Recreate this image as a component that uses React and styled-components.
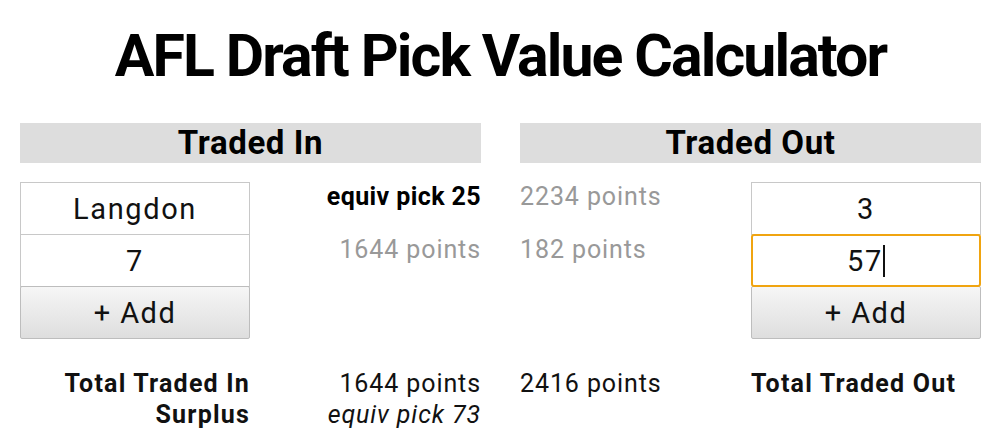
import styled, { createGlobalStyle } from 'styled-components';

const GlobalStyle = createGlobalStyle`
  html, body {
    margin: 0;
    padding: 0;
    background: #fff;
  }
  body {
    font-family: Roboto, "Liberation Sans", sans-serif;
    color: #111;
  }
`;

const Page = styled.div`
  width: 1000px;
  padding: 0 19px 0 20px;
  box-sizing: border-box;
`;

const Title = styled.h1`
  margin: 0;
  padding-top: 21px;
  height: 123px;
  box-sizing: border-box;
  text-align: center;
  font-size: 59px;
  font-weight: 700;
  letter-spacing: -1.9px;
  line-height: 70px;
  color: #000;
`;

const Columns = styled.div`
  display: grid;
  grid-template-columns: 461px 461px;
  column-gap: 39px;
`;

const Side = styled.section`
  display: flex;
  flex-direction: column;
`;

const SideHeader = styled.h2`
  margin: 0 0 19px;
  height: 40px;
  background: #dddddd;
  text-align: center;
  font-size: 33px;
  font-weight: 700;
  letter-spacing: 0.6px;
  line-height: 40px;
  color: #000;
`;

const Body = styled.div`
  display: grid;
  grid-template-columns: ${(p) => (p.$flip ? '231px 230px' : '230px 231px')};
`;

const Inputs = styled.div`
  display: flex;
  flex-direction: column;
`;

const Field = styled.div`
  height: 53px;
  box-sizing: border-box;
  border: 1px solid #c8c8c8;
  margin-top: -1px;
  background: #fff;
  display: flex;
  align-items: center;
  justify-content: center;
  font-size: 29px;
  letter-spacing: 1.6px;
  color: #111;
  &:first-child {
    margin-top: 0;
  }
  ${(p) =>
    p.$focused &&
    `
    border: 2px solid #f0a410;
    border-radius: 3px;
    position: relative;
    z-index: 1;
  `}
`;

const Caret = styled.span`
  display: inline-block;
  width: 2px;
  height: 32px;
  background: #111;
`;

const AddButton = styled.button`
  height: 53px;
  margin-top: -1px;
  border: 1px solid #bdbdbd;
  border-radius: 2px;
  background: linear-gradient(#f6f6f6, #dedede);
  font-family: Roboto, "Liberation Sans", sans-serif;
  font-size: 29px;
  letter-spacing: 1.4px;
  color: #111;
  padding: 0;
`;

const Notes = styled.div`
  display: flex;
  flex-direction: column;
  text-align: ${(p) => p.$align};
`;

const Note = styled.div`
  height: 53px;
  font-size: 25px;
  letter-spacing: ${(p) => (p.$bold ? '0.4px' : '0.9px')};
  line-height: 30px;
  font-weight: ${(p) => (p.$bold ? 700 : 400)};
  color: ${(p) => (p.$bold ? '#000' : '#999')};
`;

const Totals = styled.div`
  margin-top: 29px;
  display: grid;
  grid-template-columns: ${(p) => (p.$flip ? '231px 230px' : '230px 231px')};
`;

const TotalCell = styled.div`
  font-size: 25px;
  line-height: 31px;
  letter-spacing: ${(p) => (p.$bold ? '1.2px' : '0.9px')};
  text-align: ${(p) => p.$align};
  font-weight: ${(p) => (p.$bold ? 700 : 400)};
  color: #111;
`;

const Em = styled.i`
  font-style: italic;
`;

export default function App() {
  return (
    <Page>
      <GlobalStyle />
      <Title>AFL Draft Pick Value Calculator</Title>
      <Columns>
        <Side>
          <SideHeader>Traded In</SideHeader>
          <Body>
            <Inputs>
              <Field>Langdon</Field>
              <Field>7</Field>
              <AddButton>+ Add</AddButton>
            </Inputs>
            <Notes $align="right">
              <Note $bold>equiv pick 25</Note>
              <Note>1644 points</Note>
            </Notes>
          </Body>
          <Totals>
            <TotalCell $align="right" $bold>
              Total Traded In
              <br />
              Surplus
            </TotalCell>
            <TotalCell $align="right">
              1644 points
              <br />
              <Em>equiv pick 73</Em>
            </TotalCell>
          </Totals>
        </Side>
        <Side>
          <SideHeader>Traded Out</SideHeader>
          <Body $flip>
            <Notes $align="left">
              <Note>2234 points</Note>
              <Note>182 points</Note>
            </Notes>
            <Inputs>
              <Field>3</Field>
              <Field $focused>
                57
                <Caret />
              </Field>
              <AddButton>+ Add</AddButton>
            </Inputs>
          </Body>
          <Totals $flip>
            <TotalCell $align="left">2416 points</TotalCell>
            <TotalCell $align="left" $bold>
              Total Traded Out
            </TotalCell>
          </Totals>
        </Side>
      </Columns>
    </Page>
  );
}
